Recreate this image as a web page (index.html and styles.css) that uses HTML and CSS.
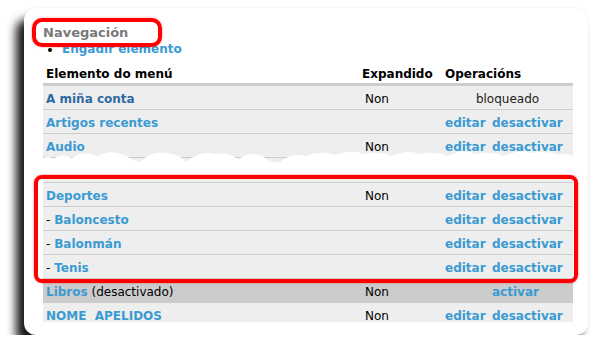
FILE: index.html
```html
<!DOCTYPE html>
<html lang="gl">
<head>
    <meta charset="UTF-8">
    <meta name="viewport" content="width=device-width, initial-scale=1.0">
    <title>Navegación</title>
    <link rel="stylesheet" href="styles.css">
</head>
<body>
    <div class="card">
        <div class="card-body">
            <h2 class="title">Navegación</h2>
            <ul class="actions">
                <li><a href="#">Engadir elemento</a></li>
            </ul>
            <table class="menu">
                <colgroup>
                    <col class="c-item">
                    <col class="c-exp">
                    <col class="c-edit">
                    <col class="c-toggle">
                </colgroup>
                <thead>
                    <tr>
                        <th>Elemento do menú</th>
                        <th>Expandido</th>
                        <th colspan="2">Operacións</th>
                    </tr>
                </thead>
                <tbody>
                    <tr>
                        <td><a href="#" class="locked">A miña conta</a></td>
                        <td>Non</td>
                        <td colspan="2" class="center">bloqueado</td>
                    </tr>
                    <tr>
                        <td><a href="#">Artigos recentes</a></td>
                        <td></td>
                        <td><a href="#">editar</a></td>
                        <td><a href="#">desactivar</a></td>
                    </tr>
                    <tr>
                        <td><a href="#">Audio</a></td>
                        <td>Non</td>
                        <td><a href="#">editar</a></td>
                        <td><a href="#">desactivar</a></td>
                    </tr>
                    <tr class="cut">
                        <td>&nbsp;</td>
                        <td></td>
                        <td></td>
                        <td></td>
                    </tr>
                    <tr>
                        <td><a href="#">Deportes</a></td>
                        <td>Non</td>
                        <td><a href="#">editar</a></td>
                        <td><a href="#">desactivar</a></td>
                    </tr>
                    <tr>
                        <td>- <a href="#">Baloncesto</a></td>
                        <td></td>
                        <td><a href="#">editar</a></td>
                        <td><a href="#">desactivar</a></td>
                    </tr>
                    <tr>
                        <td>- <a href="#">Balonmán</a></td>
                        <td></td>
                        <td><a href="#">editar</a></td>
                        <td><a href="#">desactivar</a></td>
                    </tr>
                    <tr>
                        <td>- <a href="#">Tenis</a></td>
                        <td></td>
                        <td><a href="#">editar</a></td>
                        <td><a href="#">desactivar</a></td>
                    </tr>
                    <tr class="disabled">
                        <td><a href="#">Libros</a> (desactivado)</td>
                        <td>Non</td>
                        <td></td>
                        <td><a href="#">activar</a></td>
                    </tr>
                    <tr>
                        <td><a href="#">NOME&nbsp; APELIDOS</a></td>
                        <td>Non</td>
                        <td><a href="#">editar</a></td>
                        <td><a href="#">desactivar</a></td>
                    </tr>
                </tbody>
            </table>
        </div>

        <!-- torn edge where rows were cut out of the capture -->
        <svg class="tear" width="540" height="30" viewBox="0 0 540 30">
            <path d="M0 27 L0 12 Q6 4 14 9 Q22 2 32 8 Q44 0 58 6 Q70 -1 84 5 Q92 10 100 12 Q112 0 126 3 Q140 4 146 12 Q160 0 176 4 Q190 2 198 10 Q210 0 222 6 Q232 14 240 12 Q252 2 266 6 Q280 0 296 5 Q310 -1 324 4 Q338 0 352 6 Q366 -1 380 4 Q394 0 408 6 Q422 -2 436 4 Q450 0 464 6 Q478 -1 492 3 Q506 0 520 5 Q528 2 535 8 L535 27 Z" fill="#fff"/>
        </svg>

        <div class="mark mark-title"></div>
        <div class="mark mark-group"></div>
    </div>
</body>
</html>
```

FILE: styles.css
```css
body {
    margin: 0;
    background: #fff;
    font-family: 'DejaVu Sans', Verdana, sans-serif;
    font-size: 12px;
    color: #000;
}

a {
    color: #3a9ad2;
    font-weight: bold;
    text-decoration: none;
}

.card {
    position: relative;
    box-sizing: border-box;
    width: 564px;
    height: 327px;
    margin: 8px 0 0 24px;
    padding: 16px 15px 13px 19px;
    background: #fff;
    border-radius: 12px;
    box-shadow: -8px 11px 10px rgba(0, 0, 0, 0.9), 0 0 3px rgba(0, 0, 0, 0.08);
}

.card-body {
    height: 298px;
    overflow: hidden;
}

.title {
    margin: 1px 0 0 0;
    font-size: 13px;
    line-height: 16px;
    font-weight: bold;
    color: #7a7a7a;
}

.actions {
    margin: 0 0 7px 0;
    padding-left: 19px;
    line-height: 16px;
    list-style: disc;
}

.menu {
    width: 530px;
    table-layout: fixed;
    border-collapse: separate;
    border-spacing: 0;
}

.c-item { width: 316px; }
.c-exp { width: 83px; }
.c-edit { width: 47px; }
.c-toggle { width: 84px; }

.menu th {
    padding: 2px 3px 0;
    line-height: 17px;
    text-align: left;
    font-weight: bold;
    border-bottom: 3px solid #ccc;
}

.menu td {
    padding: 3px 3px 0;
    line-height: 20px;
    white-space: nowrap;
    background: #eee;
    border-bottom: 1px solid #ccc;
}

.menu td:nth-child(2) {
    padding-left: 6px;
}

.menu td.center {
    padding-left: 3px;
    text-align: center;
    color: #222;
}

.menu a.locked {
    color: #3069a3;
}

.menu tr.cut td {
    line-height: 21px;
}

.menu tr.disabled td {
    background: #ccc;
}

.tear {
    position: absolute;
    left: 16px;
    top: 142px;
}

.mark {
    position: absolute;
    box-sizing: border-box;
    border: 4px solid #f00;
    box-shadow: 0 0 2px rgba(255, 0, 0, 0.6);
}

.mark-title {
    left: 8px;
    top: 10px;
    width: 130px;
    height: 29px;
    border-radius: 10px;
}

.mark-group {
    left: 10px;
    top: 167px;
    width: 544px;
    height: 108px;
    border-radius: 8px;
}
```
